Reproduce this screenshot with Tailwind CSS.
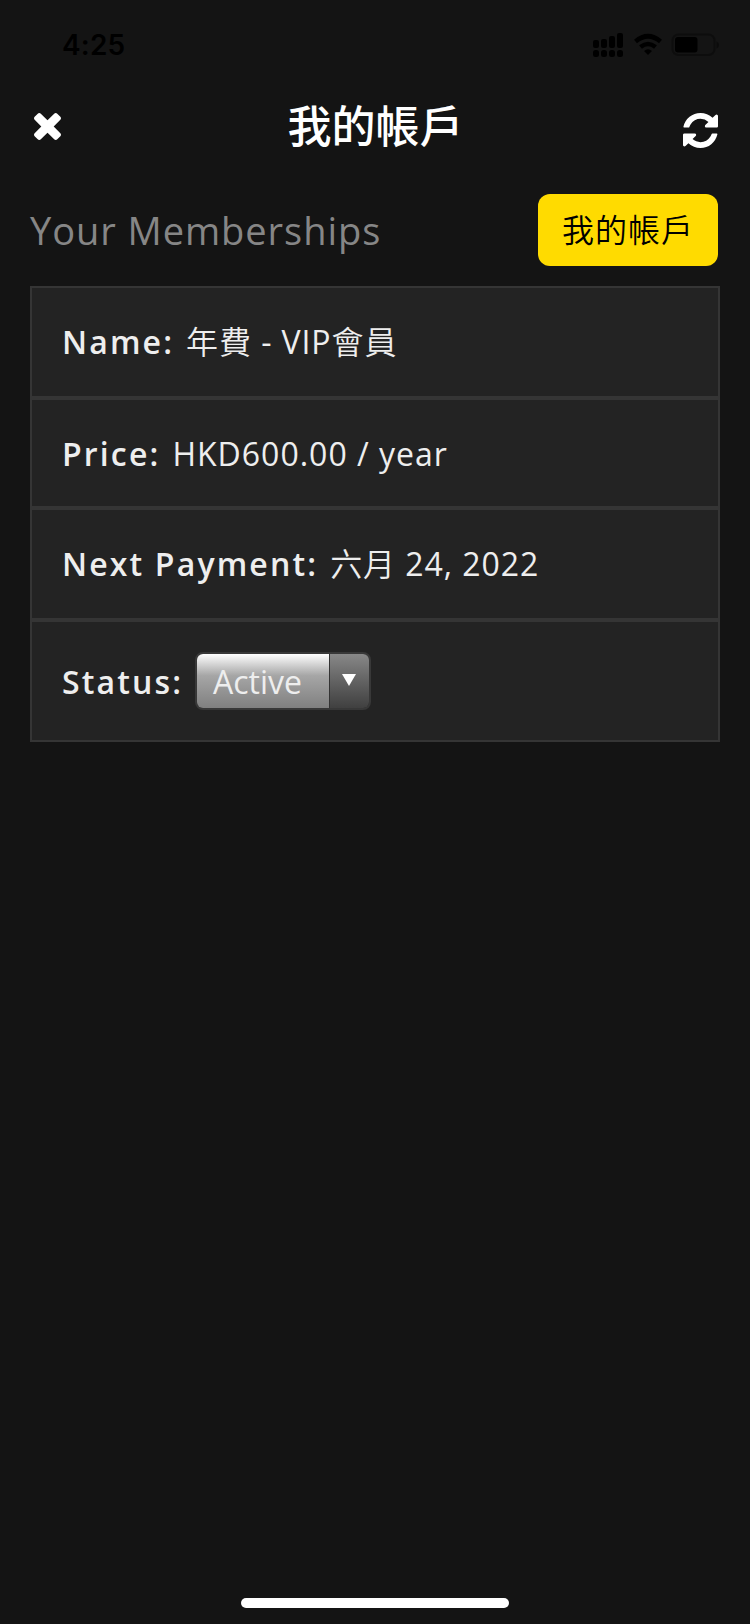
<!DOCTYPE html>
<html lang="zh-Hant">
<head>
    <meta charset="UTF-8" />
    <meta name="viewport" content="width=device-width, initial-scale=1.0">
    <title>我的帳戶</title>
    <script src="https://cdn.jsdelivr.net/npm/@tailwindcss/browser@4"></script>
</head>
<body class="bg-[#141414] font-['Open_Sans','Noto_Sans_CJK_TC',sans-serif]">
    <div class="w-[750px] h-[1624px] flex flex-col overflow-hidden">

        <!-- Status bar -->
        <div class="h-[88px] shrink-0 flex items-start justify-between pl-[62px] pr-[31px] text-black">
            <span class="mt-[27px] font-['Inter',sans-serif] font-semibold text-[28px] leading-[36px] tracking-[0.200px]">4:25</span>
            <svg class="mt-[32px] w-[127px] h-[26px]" viewBox="592 32 127 26" fill="currentColor">
                <rect x="593" y="40" width="6" height="8" rx="2" />
                <rect x="601" y="39" width="6" height="9" rx="2" />
                <rect x="609" y="36" width="6" height="12" rx="2" />
                <rect x="617" y="33" width="6" height="15" rx="2" />
                <rect x="593" y="50" width="6" height="7" rx="2.500" />
                <rect x="601" y="50" width="6" height="7" rx="2.500" />
                <rect x="609" y="50" width="6" height="7" rx="2.500" />
                <rect x="617" y="50" width="6" height="7" rx="2.500" />
                <path d="M635.500 41.500Q648 31 660.500 41.500M640.500 47Q648 41 655.500 47" fill="none" stroke="currentColor" stroke-width="4.600" />
                <path d="M644 51Q648 47.500 652 51L648 55Z" />
                <rect x="672.500" y="34.500" width="42" height="20.500" rx="6" fill="none" stroke="#0d0d0d" stroke-width="2" />
                <rect x="675" y="37" width="22.500" height="15.500" rx="3" />
                <path d="M716.500 41.500Q719 42.500 719 45T716.500 48.500Z" fill="#0b0b0b" />
            </svg>
        </div>

        <!-- Title bar -->
        <header class="h-[100px] shrink-0 flex items-start justify-between pl-[34px] pr-[32px] text-white">
            <button class="mt-[25px] mr-[7px]" aria-label="Close">
                <svg class="block w-[27px] h-[27px]" viewBox="302 366 1188 1188" fill="currentColor"><path d="M1490 1322q0 40-28 68l-136 136q-28 28-68 28t-68-28l-294-294-294 294q-28 28-68 28t-68-28l-136-136q-28-28-28-68t28-68l294-294-294-294q-28-28-28-68t28-68l136-136q28-28 68-28t68 28l294 294 294-294q28-28 68-28t68 28l136 136q28 28 28 68t-28 68l-294 294 294 294q28 28 28 68z" /></svg>
            </button>
            <h1 class="mt-[8px] text-[44px] leading-[60px] font-medium">我的帳戶</h1>
            <button class="mt-[25px]" aria-label="Refresh">
                <svg class="block w-[35px] h-[35px]" viewBox="128 128 1536 1536" fill="currentColor"><path d="M1639 1056q0 5-1 7-64 268-268 434.500t-478 166.500q-146 0-282.500-55t-243.500-157l-129 129q-19 19-45 19t-45-19-19-45v-448q0-26 19-45t45-19h448q26 0 45 19t19 45-19 45l-137 137q71 66 161 102t187 36q134 0 250-65t186-179q11-17 53-117 8-23 30-23h192q13 0 22.500 9.500t9.500 22.500zm25-800v448q0 26-19 45t-45 19h-448q-26 0-45-19t-19-45 19-45l138-138q-148-137-349-137-134 0-250 65t-186 179q-11 17-53 117-8 23-30 23h-199q-13 0-22.500-9.500t-9.500-22.500v-7q65-268 270-434.500t480-166.500q146 0 284 55.500t245 156.500l130-129q19-19 45-19t45 19 19 45z" /></svg>
            </button>
        </header>

        <main class="px-[30px] flex-grow">
            <div class="flex items-center justify-between h-[98px] pb-[14px]">
                <h2 class="-mt-px text-[38px] leading-[52px] tracking-[0.950px] text-[#868686]">Your Memberships</h2>
                <a href="#" class="mr-[2px] w-[180px] h-[72px] rounded-xl bg-[#ffdb00] text-black flex items-center justify-center text-[32px] leading-[48px] font-[350] tracking-[1px]">我的帳戶</a>
            </div>

            <div class="h-[456px] border-2 border-[#353535] bg-[#232323] text-[#eee] text-[32px] leading-[44px]">
                <div class="h-[112px] px-[30px] border-b-4 border-[#353535] flex items-center gap-[12px]">
                    <span class="font-semibold tracking-[2.150px]">Name:</span>
                    <span class="tracking-[0.900px]"><span class="font-[350]">年費</span> - VIP<span class="font-[350]">會員</span></span>
                </div>
                <div class="h-[110px] px-[30px] pt-[2px] border-b-4 border-[#353535] flex items-center gap-[12px]">
                    <span class="font-semibold tracking-[2.150px]">Price:</span>
                    <span class="tracking-[1px]">HKD600.00 / year</span>
                </div>
                <div class="h-[112px] px-[30px] border-b-4 border-[#353535] flex items-center gap-[12px]">
                    <span class="font-semibold tracking-[2.150px]">Next Payment:</span>
                    <span class="tracking-[0.950px]"><span class="font-[350]">六月</span> 24, 2022</span>
                </div>
                <div class="h-[118px] px-[30px] flex items-center">
                    <span class="w-[133px] pt-[2px] font-semibold tracking-[2.150px]">Status:</span>
                    <div class="w-[176px] h-[58px] flex rounded-lg border-2 border-[#383838] overflow-hidden">
                        <span class="w-[132px] pl-4 leading-[56px] bg-linear-to-b from-white via-[#a6a6a6] via-40% to-[#808080]">Active</span>
                        <span class="flex-1 border-l border-[#333] flex justify-center pr-px bg-linear-to-b from-[#888] to-[#404040]">
                            <svg class="mt-[20px] w-[14px] h-[12px]" viewBox="0 0 14 12" fill="#fff"><path d="M0 0H14L7 12Z" /></svg>
                        </span>
                    </div>
                </div>
            </div>
        </main>

        <!-- Home indicator -->
        <div class="mx-auto mb-[16px] w-[268px] h-[10px] rounded-full bg-white"></div>
    </div>
</body>
</html>
